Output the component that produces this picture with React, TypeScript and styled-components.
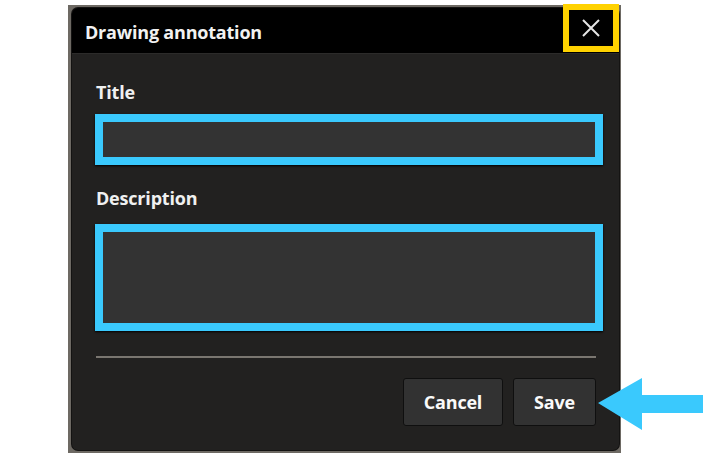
import styled, { createGlobalStyle } from "styled-components"

const GlobalStyle = createGlobalStyle`
  html, body {
    margin: 0;
    padding: 0;
    background: #ffffff;
  }
  body {
    font-family: "Open Sans", "Noto Sans", sans-serif;
  }
`

const Page = styled.div`
  position: relative;
  width: 703px;
  height: 457px;
  padding: 5px 0 0 68px;
  box-sizing: border-box;
`

const Frame = styled.div`
  width: 553px;
  padding: 3px 2px 3px 4px;
  box-sizing: border-box;
  background: #6d6963;
`

const Dialog = styled.div`
  border-radius: 6px;
  background: #222120;
  box-shadow: 0 0 0 1px #141312;
`

const TitleBar = styled.div`
  display: flex;
  align-items: flex-start;
  justify-content: space-between;
  height: 45px;
  padding: 0 6px 0 13px;
  background: #000;
  border-radius: 6px 6px 0 0;
  border-bottom: 1px solid #2c2b2a;
`

const Heading = styled.h1`
  margin: 0;
  padding-top: 2px;
  line-height: 45px;
  font-size: 18px;
  font-weight: 700;
  color: #f2f2f2;
  letter-spacing: -0.2px;
`

const CloseButton = styled.button`
  display: flex;
  align-items: center;
  justify-content: center;
  width: 44px;
  height: 36px;
  margin-top: 2px;
  padding: 0;
  background: #000;
  border: 0;
  outline: 6px solid #ffd200;
  cursor: pointer;
`

const Body = styled.div`
  padding: 28px 23px 24px 24px;
`

const Label = styled.label<{ $gap: number }>`
  display: block;
  line-height: 20px;
  font-size: 18px;
  font-weight: 700;
  color: #f0f0f0;
  letter-spacing: -0.2px;
  margin-bottom: ${(p) => p.$gap}px;
`

const TextInput = styled.input`
  display: block;
  width: 508px;
  height: 51px;
  margin: 0 0 23px -1px;
  box-sizing: border-box;
  border: 8px solid #3ac9fd;
  background: #333333;
  box-shadow: 0 1px 2px #000;
  color: #fff;
  font: inherit;
  outline: none;
`

const TextArea = styled.textarea`
  display: block;
  width: 508px;
  height: 107px;
  margin: 0 0 0 -1px;
  box-sizing: border-box;
  border: 8px solid #3ac9fd;
  background: #333333;
  box-shadow: 0 1px 2px #000;
  color: #fff;
  font: inherit;
  outline: none;
  resize: none;
`

const Divider = styled.hr`
  margin: 25px 0 20px;
  border: 0;
  height: 2px;
  background: #7a7670;
`

const Actions = styled.div`
  display: flex;
  justify-content: flex-end;
  gap: 10px;
`

const Button = styled.button<{ $w: number }>`
  width: ${(p) => p.$w}px;
  height: 48px;
  background: #323232;
  border: 1px solid #0f0f0f;
  border-radius: 3px;
  color: #fafafa;
  font-family: inherit;
  font-size: 18px;
  font-weight: 700;
  letter-spacing: -0.2px;
  cursor: pointer;
`

const Pointer = styled.svg`
  position: absolute;
  left: 598px;
  top: 378px;
`

export default function App() {
  return (
    <>
      <GlobalStyle />
      <Page>
        <Frame>
          <Dialog>
            <TitleBar>
              <Heading>Drawing annotation</Heading>
              <CloseButton aria-label="Close">
                <svg width="18" height="18" viewBox="0 0 18 18">
                  <path d="M1 1 L17 17 M17 1 L1 17" stroke="#e6e6e6" strokeWidth="2" />
                </svg>
              </CloseButton>
            </TitleBar>
            <Body>
              <Label $gap={12}>Title</Label>
              <TextInput type="text" />
              <Label $gap={16}>Description</Label>
              <TextArea />
              <Divider />
              <Actions>
                <Button $w={100}>Cancel</Button>
                <Button $w={83}>Save</Button>
              </Actions>
            </Body>
          </Dialog>
        </Frame>
        <Pointer width="105" height="52" viewBox="0 0 105 52">
          <polygon points="0,25 44,0 44,17 105,17 105,35 44,35 44,52" fill="#3ac9fd" />
        </Pointer>
      </Page>
    </>
  )
}
